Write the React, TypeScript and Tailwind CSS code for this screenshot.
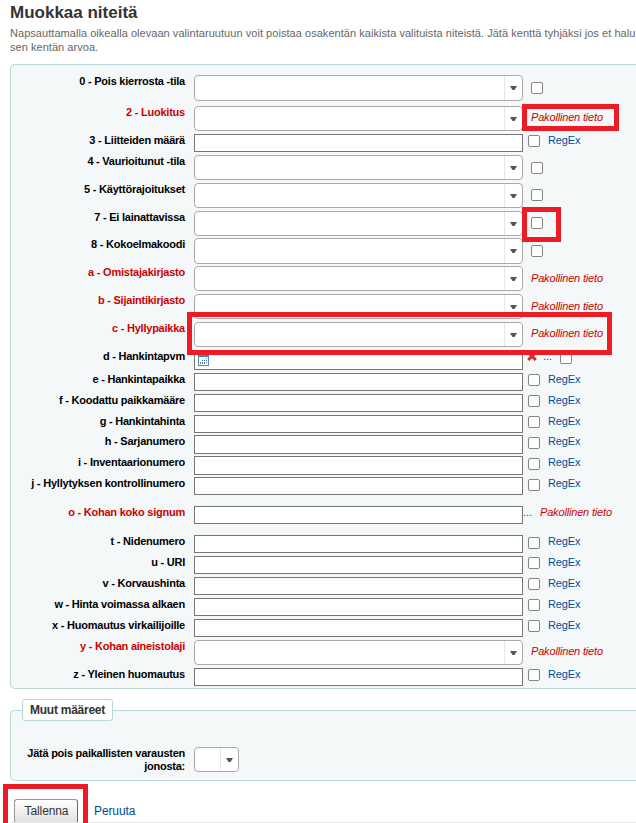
import React from "react";

type Side = "check" | "required" | "regex" | "dots" | "date";

interface Field {
  label: string;
  kind: "select" | "text" | "date";
  side: Side;
  row: string;
  box: string;
  sideTop: string;
}

const fields: Field[] = [
  { label: "0 - Pois kierrosta -tila", kind: "select", side: "check", row: "h-[31px]", box: "h-[26px]", sideTop: "mt-[7px]" },
  { label: "2 - Luokitus", kind: "select", side: "required", row: "h-[28px]", box: "h-[25px]", sideTop: "mt-[5px]" },
  { label: "3 - Liitteiden määrä", kind: "text", side: "regex", row: "h-[21px]", box: "h-[18px]", sideTop: "mt-[1px]" },
  { label: "4 - Vaurioitunut -tila", kind: "select", side: "check", row: "h-[28px]", box: "h-[25px]", sideTop: "mt-[7px]" },
  { label: "5 - Käyttörajoitukset", kind: "select", side: "check", row: "h-[28px]", box: "h-[25px]", sideTop: "mt-[6px]" },
  { label: "7 - Ei lainattavissa", kind: "select", side: "check", row: "h-[27px]", box: "h-[25px]", sideTop: "mt-[6px]" },
  { label: "8 - Kokoelmakoodi", kind: "select", side: "check", row: "h-[28px]", box: "h-[26px]", sideTop: "mt-[7px]" },
  { label: "a - Omistajakirjasto", kind: "select", side: "required", row: "h-[28px]", box: "h-[25px]", sideTop: "mt-[6px]" },
  { label: "b - Sijaintikirjasto", kind: "select", side: "required", row: "h-[28px]", box: "h-[25px]", sideTop: "mt-[6px]" },
  { label: "c - Hyllypaikka", kind: "select", side: "required", row: "h-[28px]", box: "h-[25px]", sideTop: "mt-[5px]" },
  { label: "d - Hankintapvm", kind: "date", side: "date", row: "h-[23px]", box: "h-[20px]", sideTop: "mt-[1px]" },
  { label: "e - Hankintapaikka", kind: "text", side: "regex", row: "h-[21px]", box: "h-[18px]", sideTop: "mt-[1px]" },
  { label: "f - Koodattu paikkamääre", kind: "text", side: "regex", row: "h-[21px]", box: "h-[18px]", sideTop: "mt-[1px]" },
  { label: "g - Hankintahinta", kind: "text", side: "regex", row: "h-[20px]", box: "h-[18px]", sideTop: "mt-[1px]" },
  { label: "h - Sarjanumero", kind: "text", side: "regex", row: "h-[21px]", box: "h-[19px]", sideTop: "mt-[2px]" },
  { label: "i - Inventaarionumero", kind: "text", side: "regex", row: "h-[21px]", box: "h-[19px]", sideTop: "mt-[2px]" },
  { label: "j - Hyllytyksen kontrollinumero", kind: "text", side: "regex", row: "h-[29px]", box: "h-[18px]", sideTop: "mt-[2px]" },
  { label: "o - Kohan koko signum", kind: "text", side: "dots", row: "h-[29px]", box: "h-[18px]", sideTop: "mt-0" },
  { label: "t - Nidenumero", kind: "text", side: "regex", row: "h-[21px]", box: "h-[18px]", sideTop: "mt-[2px]" },
  { label: "u - URI", kind: "text", side: "regex", row: "h-[21px]", box: "h-[18px]", sideTop: "mt-[1px]" },
  { label: "v - Korvaushinta", kind: "text", side: "regex", row: "h-[21px]", box: "h-[18px]", sideTop: "mt-[1px]" },
  { label: "w - Hinta voimassa alkaen", kind: "text", side: "regex", row: "h-[21px]", box: "h-[18px]", sideTop: "mt-[1px]" },
  { label: "x - Huomautus virkailijoille", kind: "text", side: "regex", row: "h-[21px]", box: "h-[18px]", sideTop: "mt-[1px]" },
  { label: "y - Kohan aineistolaji", kind: "select", side: "required", row: "h-[28px]", box: "h-[25px]", sideTop: "mt-[5px]" },
  { label: "z - Yleinen huomautus", kind: "text", side: "regex", row: "h-[18px]", box: "h-[18px]", sideTop: "mt-[1px]" },
];

function Checkbox({ className = "" }: { className?: string }) {
  return (
    <input
      type="checkbox"
      className={`size-3 shrink-0 appearance-none rounded-[2px] border border-[#858585] bg-white ${className}`}
    />
  );
}

function SelectBox({ className }: { className: string }) {
  return (
    <div className={`flex shrink-0 justify-end rounded-[4px] border border-[#aaa] bg-white ${className}`}>
      <div className="flex w-[18px] items-center justify-center border-l border-[#e6e6e6]">
        <svg width="7" height="4" viewBox="0 0 7 4">
          <path d="M0 0h7L4.5 4h-2z" fill="#555" />
        </svg>
      </div>
    </div>
  );
}

function Required({ className = "" }: { className?: string }) {
  return <em className={`leading-[13px] tracking-[-0.17px] text-[#c00] ${className}`}>Pakollinen tieto</em>;
}

function CalendarIcon() {
  return (
    <svg width="11" height="12" viewBox="0 0 11 12" className="mt-[3px] ml-[3px]" shapeRendering="crispEdges">
      <rect x="0.5" y="0.5" width="10" height="11" fill="#fff" stroke="#5b8cc0" />
      <path d="M0 0h11v3H0z" fill="#4a7fb8" />
      <path d="M8 4h1v1H8zM4 6h1v1H4zM6 6h1v1H6zM8 6h1v1H8zM2 8h1v1H2zM4 8h1v1H4zM6 8h1v1H6zM8 8h1v1H8zM2 9h1v1H2zM4 9h1v1H4zM6 9h1v1H6z" fill="#4479b4" />
    </svg>
  );
}

function FieldSide({ field }: { field: Field }) {
  switch (field.side) {
    case "check":
      return <Checkbox className={`ml-2 ${field.sideTop}`} />;
    case "required":
      return <Required className={`ml-2 ${field.sideTop}`} />;
    case "regex":
      return (
        <>
          <Checkbox className={`ml-[5px] ${field.sideTop}`} />
          <a className="ml-2 leading-[13px] tracking-[-0.15px] text-[#004d99]">RegEx</a>
        </>
      );
    case "dots":
      return (
        <>
          <a className="w-[9px] leading-[13px] text-[#004d99]">...</a>
          <Required className="ml-2" />
        </>
      );
    case "date":
      return (
        <>
          <svg width="10" height="10" viewBox="0 0 10 10" className="mt-[1px] ml-1">
            <path d="M1.2 1.2 8.8 9M8.8 1.2 1.2 9" stroke="#d22d2d" strokeWidth="3" />
          </svg>
          <a className="ml-[6px] leading-[13px] text-[#004d99]">...</a>
          <Checkbox className="ml-2 mt-[2px]" />
        </>
      );
  }
}

function FieldRow({ field }: { field: Field }) {
  const required = field.side === "required" || field.side === "dots";
  return (
    <div className={`flex items-start ${field.row}`}>
      <label
        className={`mr-[9px] w-[174px] shrink-0 text-right leading-[13px] font-bold tracking-[-0.23px] whitespace-nowrap ${
          required ? "text-[#c00]" : "text-black"
        }`}
      >
        {field.label}
      </label>
      {field.kind === "select" ? (
        <SelectBox className={`w-[329px] ${field.box}`} />
      ) : (
        <div className={`w-[329px] shrink-0 border border-[#767676] bg-white ${field.box}`}>
          {field.kind === "date" && <CalendarIcon />}
        </div>
      )}
      <FieldSide field={field} />
    </div>
  );
}

function Highlight({ className }: { className: string }) {
  return <div className={`pointer-events-none absolute border-[5px] border-[#ed1c24] ${className}`} />;
}

export default function App() {
  return (
    <div className="relative h-[823px] w-[636px] overflow-hidden bg-white pl-[10px] font-['Liberation_Sans',Arial,sans-serif] text-[11px]">
      <h1 className="h-[26px] pt-[3px] text-[17px] leading-[20px] font-bold text-[#333]">Muokkaa niteitä</h1>
      <p className="h-[38px] leading-[14px] tracking-[0.045px] whitespace-nowrap text-[#666]">
        Napsauttamalla oikealla olevaan valintaruutuun voit poistaa osakentän kaikista valituista niteistä. Jätä kenttä tyhjäksi jos et halu
        <br />
        sen kentän arvoa.
      </p>

      <section className="h-[625px] rounded-l-[5px] border border-r-0 border-[#b9d8d9] bg-[#f4f8f9] pt-[10px]">
        {fields.map((field) => (
          <FieldRow key={field.label} field={field} />
        ))}
      </section>

      <section className="mt-[21px] h-[71px] rounded-l-[5px] border border-r-0 border-[#b9d8d9] bg-[#f4f8f9]">
        <h2 className="-mt-[12px] ml-[11px] flex h-[22px] w-[91px] items-center justify-center rounded-[3px] border border-[#b9d8d9] bg-white text-[12px] font-bold tracking-[-0.25px] whitespace-nowrap text-[#333]">
          Muut määreet
        </h2>
        <div className="mt-[26px] flex items-start">
          <label className="mr-[9px] w-[174px] shrink-0 text-right leading-[13px] font-bold tracking-[-0.25px] text-black">
            Jätä pois paikallisten varausten
            <br />
            jonosta:
          </label>
          <SelectBox className="h-[25px] w-[45px]" />
        </div>
      </section>

      <footer className="mt-[18px] flex h-[24px] border-b border-[#e8e8e8] pl-1 text-[12px]">
        <button className="h-[23px] w-16 rounded-t-[3px] border border-b-0 border-[#999] border-r-[#666] bg-linear-to-b from-white to-[#e2e2e2] pl-px tracking-[-0.1px] text-[#333]">
          Tallenna
        </button>
        <a className="ml-4 leading-[24px] tracking-[-0.1px] text-[#004d99]">Peruuta</a>
      </footer>

      <Highlight className="top-[104px] left-[522px] h-[27px] w-[97px]" />
      <Highlight className="top-[207px] left-[522px] h-[35px] w-[39px]" />
      <Highlight className="top-[312px] left-[187px] h-[43px] w-[425px]" />
      <Highlight className="top-[784px] left-[3px] h-[50px] w-[85px]" />
    </div>
  );
}
